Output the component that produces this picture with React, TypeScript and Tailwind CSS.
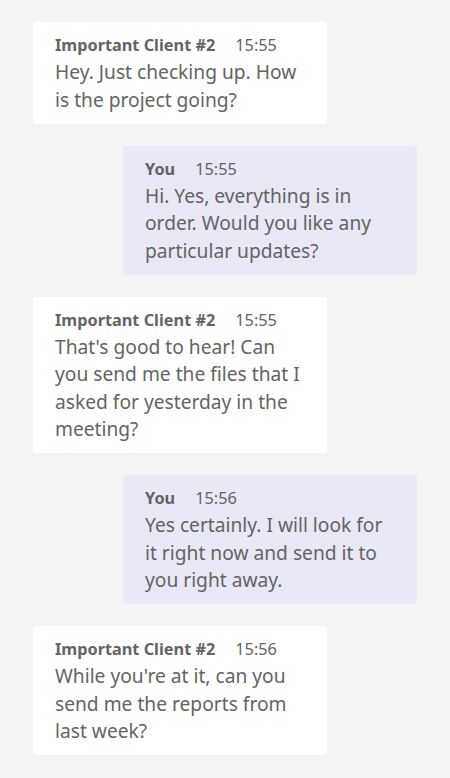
type Message = {
  author: string;
  time: string;
  text: string;
  mine?: boolean;
};

const messages: Message[] = [
  {
    author: "Important Client #2",
    time: "15:55",
    text: "Hey. Just checking up. How is the project going?",
  },
  {
    author: "You",
    time: "15:55",
    text: "Hi. Yes, everything is in order. Would you like any particular updates?",
    mine: true,
  },
  {
    author: "Important Client #2",
    time: "15:55",
    text: "That's good to hear! Can you send me the files that I asked for yesterday in the meeting?",
  },
  {
    author: "You",
    time: "15:56",
    text: "Yes certainly. I will look for it right now and send it to you right away.",
    mine: true,
  },
  {
    author: "Important Client #2",
    time: "15:56",
    text: "While you're at it, can you send me the reports from last week?",
  },
];

function Bubble({ msg }: { msg: Message }) {
  return (
    <div
      className={`w-[294px] rounded-[3px] pl-[22px] pr-[20px] pt-[11px] pb-[10.5px] ${
        msg.mine ? "ml-auto mr-[33px] bg-[#e8e8f6]" : "ml-[33px] bg-white"
      }`}
    >
      <div className="flex items-baseline h-[25px] text-[16.3px] leading-[24px]">
        <span className="font-bold">{msg.author}</span>
        <span className="ml-[20px]">{msg.time}</span>
      </div>
      <p className="text-[19.2px] leading-[27.5px]">{msg.text}</p>
    </div>
  );
}

export default function App() {
  return (
    <div
      className="min-h-[778px] bg-[#f4f4f4] text-[#646464] pt-[22px] pb-[22px] flex flex-col gap-[22px]"
      style={{ fontFamily: '"Noto Sans", sans-serif' }}
    >
      {messages.map((m, i) => (
        <Bubble key={i} msg={m} />
      ))}
    </div>
  );
}
